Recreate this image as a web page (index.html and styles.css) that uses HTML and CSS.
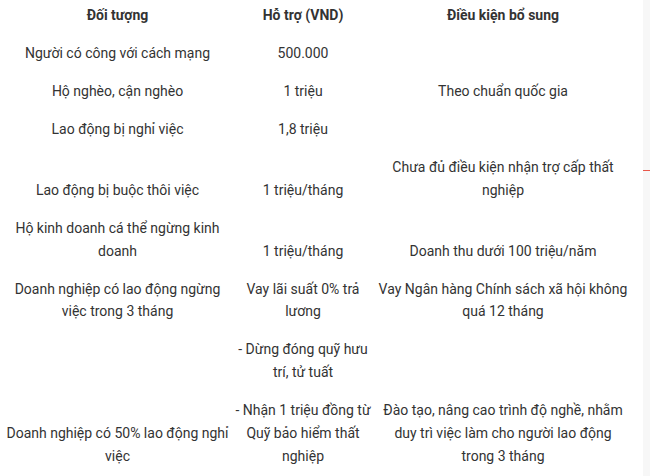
FILE: index.html
```html
<!DOCTYPE html>
<html lang="vi">
<head>
<meta charset="utf-8">
<link rel="stylesheet" href="styles.css">
</head>
<body>
<div class="page">
  <main class="content">
    <table class="support">
      <colgroup>
        <col class="c1"><col class="c2"><col class="c3">
      </colgroup>
      <thead>
        <tr><th>Đối tượng</th><th>Hỗ trợ (VND)</th><th>Điều kiện bổ sung</th></tr>
      </thead>
      <tbody>
        <tr><td>Người có công với cách mạng</td><td>500.000</td><td></td></tr>
        <tr><td>Hộ nghèo, cận nghèo</td><td>1 triệu</td><td>Theo chuẩn quốc gia</td></tr>
        <tr><td>Lao động bị nghỉ việc</td><td>1,8 triệu</td><td></td></tr>
        <tr><td>Lao động bị buộc thôi việc</td><td>1 triệu/tháng</td><td>Chưa đủ điều kiện nhận trợ cấp thất nghiệp</td></tr>
        <tr><td>Hộ kinh doanh cá thể ngừng kinh doanh</td><td>1 triệu/tháng</td><td>Doanh thu dưới 100 triệu/năm</td></tr>
        <tr><td>Doanh nghiệp có lao động ngừng việc trong 3 tháng</td><td>Vay lãi suất 0% trả lương</td><td>Vay Ngân hàng Chính sách xã hội không quá 12 tháng</td></tr>
        <tr><td></td><td>- Dừng đóng quỹ hưu trí, tử tuất</td><td></td></tr>
        <tr><td>Doanh nghiệp có 50% lao động nghỉ việc</td><td>- Nhận 1 triệu đồng từ Quỹ bảo hiểm thất nghiệp</td><td>Đào tạo, nâng cao trình độ nghề, nhằm duy trì việc làm cho người lao động trong 3 tháng</td></tr>
      </tbody>
    </table>
  </main>
  <aside class="side"><span class="mark"></span></aside>
</div>
</body>
</html>
```
FILE: styles.css
```css
html, body {
  margin: 0;
  padding: 0;
  background: #ffffff;
}
body {
  font-family: Roboto, "Liberation Sans", Arial, sans-serif;
  font-size: 14px;
  color: #333333;
  overflow: hidden;
}
.page {
  display: flex;
  width: 650px;
  height: 476px;
  overflow: hidden;
}
.content {
  width: 643px;
  flex: none;
}
.support {
  width: 633px;
  margin-top: -3px;
  border-collapse: collapse;
  table-layout: fixed;
}
.c1 { width: 233px; }
.c2 { width: 140px; }
.c3 { width: 260px; }
.support th,
.support td {
  padding: 7.6px 0;
  line-height: 22.8px;
  text-align: center;
  vertical-align: bottom;
}
.support th:first-child,
.support td:first-child {
  padding-left: 2px;
}
.support th:last-child,
.support td:last-child {
  padding-left: 5px;
  padding-right: 5px;
}
.support th {
  font-weight: 700;
  padding-top: 7.4px;
  padding-bottom: 7.4px;
}
.side {
  flex: 1;
  background: #f7f7f7;
  position: relative;
}
.mark {
  position: absolute;
  left: 0;
  top: 170px;
  width: 8px;
  height: 1px;
  background: #e8574a;
}
```
